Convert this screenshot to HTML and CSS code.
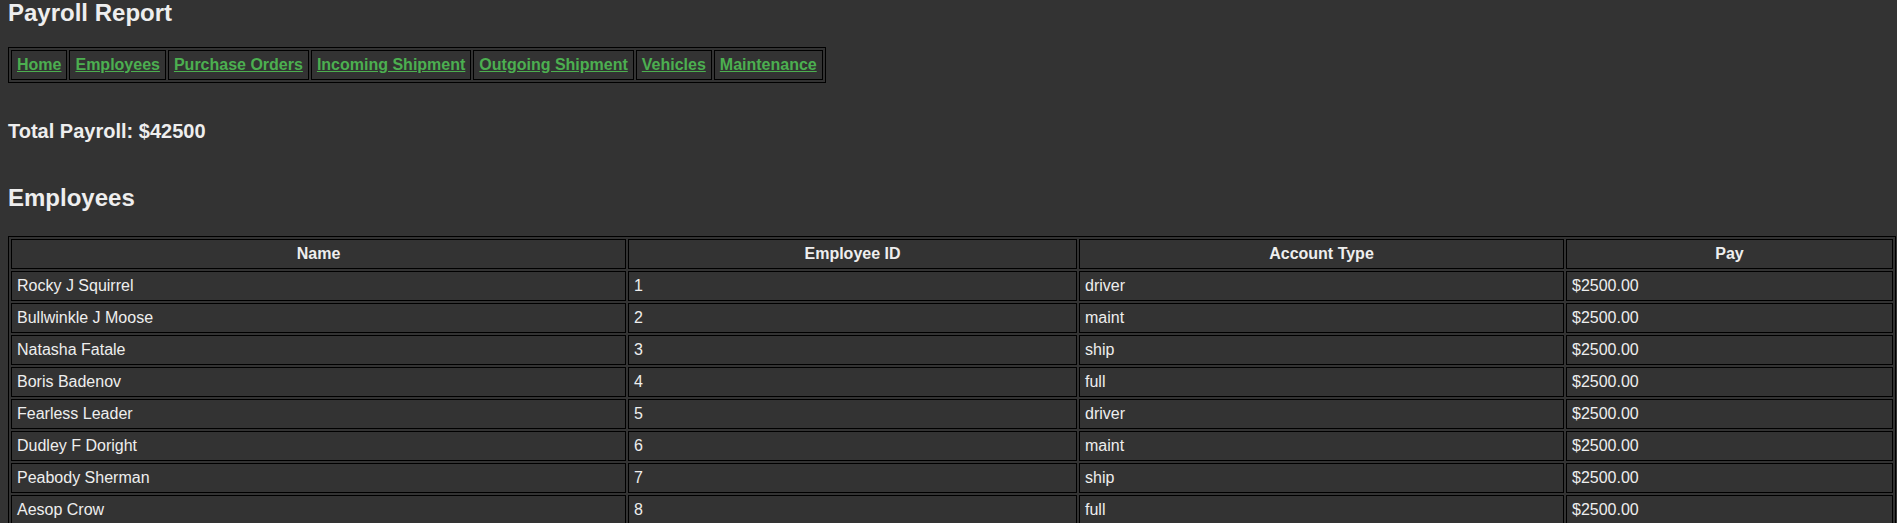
FILE: index.html
```html
<!DOCTYPE html>
<html>
<head>
<meta charset="utf-8">
<title>Payroll Report</title>
<link rel="stylesheet" href="styles.css">
</head>
<body>
<h1 class="page-title">Payroll Report</h1>
<table class="nav">
  <tr>
    <td><a href="#">Home</a></td>
    <td><a href="#">Employees</a></td>
    <td><a href="#">Purchase Orders</a></td>
    <td><a href="#">Incoming Shipment</a></td>
    <td><a href="#">Outgoing Shipment</a></td>
    <td><a href="#">Vehicles</a></td>
    <td><a href="#">Maintenance</a></td>
  </tr>
</table>
<h3 class="total">Total Payroll: $42500</h3>
<h2 class="section-title">Employees</h2>
<table class="employees">
  <thead>
    <tr>
      <th class="col-name">Name</th>
      <th class="col-id">Employee ID</th>
      <th class="col-type">Account Type</th>
      <th class="col-pay">Pay</th>
    </tr>
  </thead>
  <tbody>
    <tr><td>Rocky J Squirrel</td><td>1</td><td>driver</td><td>$2500.00</td></tr>
    <tr><td>Bullwinkle J Moose</td><td>2</td><td>maint</td><td>$2500.00</td></tr>
    <tr><td>Natasha Fatale</td><td>3</td><td>ship</td><td>$2500.00</td></tr>
    <tr><td>Boris Badenov</td><td>4</td><td>full</td><td>$2500.00</td></tr>
    <tr><td>Fearless Leader</td><td>5</td><td>driver</td><td>$2500.00</td></tr>
    <tr><td>Dudley F Doright</td><td>6</td><td>maint</td><td>$2500.00</td></tr>
    <tr><td>Peabody Sherman</td><td>7</td><td>ship</td><td>$2500.00</td></tr>
    <tr><td>Aesop Crow</td><td>8</td><td>full</td><td>$2500.00</td></tr>
  </tbody>
</table>
</body>
</html>
```

FILE: styles.css
```css
html, body {
  background: #333333;
}
body {
  margin: 0;
  padding: 0 8px;
  color: #eeeeee;
  font-family: "Liberation Sans", Arial, sans-serif;
  font-size: 16px;
}
.page-title {
  margin: 0;
  font-size: 24px;
  line-height: 26px;
  font-weight: bold;
}
.nav {
  margin-top: 21px;
  border: 1px solid #000;
  border-spacing: 2px;
}
.nav td {
  border: 1px solid #000;
  padding: 5px;
  line-height: 18px;
}
.nav a {
  color: #4caf50;
  font-weight: bold;
  text-decoration: underline;
}
.total {
  margin: 37px 0 0 0;
  font-size: 20px;
  line-height: 23px;
  font-weight: bold;
}
.section-title {
  margin: 41px 0 0 0;
  font-size: 24px;
  line-height: 28px;
  font-weight: bold;
}
.employees {
  margin-top: 24px;
  width: 1888px;
  table-layout: fixed;
  border: 1px solid #000;
  border-spacing: 2px;
}
.employees th,
.employees td {
  box-sizing: border-box;
  border: 1px solid #000;
  padding: 5px;
  line-height: 18px;
  text-align: left;
}
.employees th {
  text-align: center;
  font-weight: bold;
}
.col-name { width: 615px; }
.col-id { width: 449px; }
.col-type { width: 485px; }
.col-pay { width: 327px; }
```
